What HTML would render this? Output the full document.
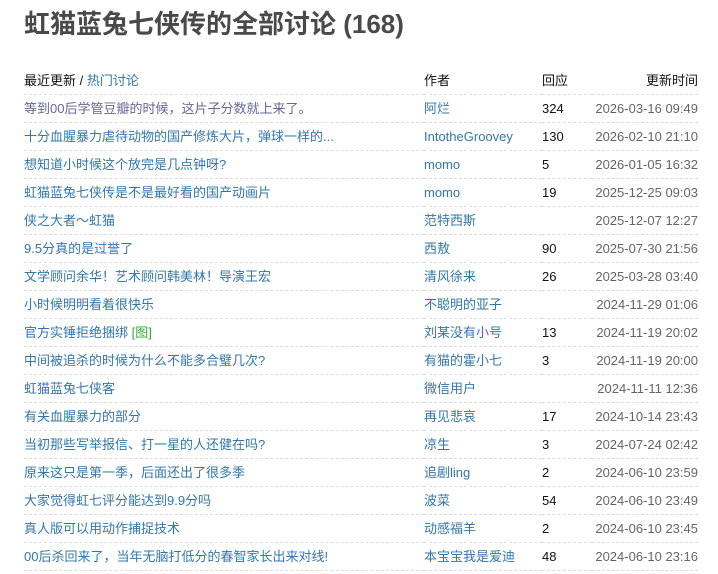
<!DOCTYPE html>
<html><head><meta charset="utf-8"><style>
body{margin:0;background:#fff;font-family:"Liberation Sans","Noto Sans CJK SC",sans-serif;font-size:13px;color:#111;width:718px;height:574px;overflow:hidden}
h1{position:absolute;left:24px;top:6px;margin:0;font-size:26px;font-weight:bold;color:#494949;line-height:36px}
table{position:absolute;left:24px;top:67px;width:674px;border-collapse:collapse;table-layout:fixed}
td{height:27px;padding:0;border-bottom:1px dashed #ddd;white-space:nowrap;line-height:27px;overflow:visible}
a{color:#37a;text-decoration:none}
a.v{color:#669}
.t{text-align:right;color:#666}
.g{color:#3a3}
</style></head><body>
<h1>虹猫蓝兔七侠传的全部讨论 (168)</h1>
<table>
<colgroup><col style="width:400px"><col style="width:118px"><col style="width:50px"><col style="width:106px"></colgroup>
<tr><td>最近更新 / <a>热门讨论</a></td><td>作者</td><td>回应</td><td class="t" style="color:#111">更新时间</td></tr>
<tr><td><a class="v">等到00后学管豆瓣的时候，这片子分数就上来了。</a></td><td><a>阿烂</a></td><td>324</td><td class="t">2026-03-16 09:49</td></tr>
<tr><td><a>十分血腥暴力虐待动物的国产修炼大片，弹球一样的...</a></td><td><a>IntotheGroovey</a></td><td>130</td><td class="t">2026-02-10 21:10</td></tr>
<tr><td><a>想知道小时候这个放完是几点钟呀?</a></td><td><a>momo</a></td><td>5</td><td class="t">2026-01-05 16:32</td></tr>
<tr><td><a>虹猫蓝兔七侠传是不是最好看的国产动画片</a></td><td><a>momo</a></td><td>19</td><td class="t">2025-12-25 09:03</td></tr>
<tr><td><a>侠之大者～虹猫</a></td><td><a>范特西斯</a></td><td></td><td class="t">2025-12-07 12:27</td></tr>
<tr><td><a>9.5分真的是过誉了</a></td><td><a>西敖</a></td><td>90</td><td class="t">2025-07-30 21:56</td></tr>
<tr><td><a>文学顾问余华！艺术顾问韩美林！导演王宏</a></td><td><a>清风徐来</a></td><td>26</td><td class="t">2025-03-28 03:40</td></tr>
<tr><td><a>小时候明明看着很快乐</a></td><td><a>不聪明的亚子</a></td><td></td><td class="t">2024-11-29 01:06</td></tr>
<tr><td><a>官方实锤拒绝捆绑</a> <span class="g">[图]</span></td><td><a>刘某没有小号</a></td><td>13</td><td class="t">2024-11-19 20:02</td></tr>
<tr><td><a>中间被追杀的时候为什么不能多合璧几次?</a></td><td><a>有猫的霍小七</a></td><td>3</td><td class="t">2024-11-19 20:00</td></tr>
<tr><td><a>虹猫蓝兔七侠客</a></td><td><a>微信用户</a></td><td></td><td class="t">2024-11-11 12:36</td></tr>
<tr><td><a>有关血腥暴力的部分</a></td><td><a>再见悲哀</a></td><td>17</td><td class="t">2024-10-14 23:43</td></tr>
<tr><td><a>当初那些写举报信、打一星的人还健在吗?</a></td><td><a>凉生</a></td><td>3</td><td class="t">2024-07-24 02:42</td></tr>
<tr><td><a>原来这只是第一季，后面还出了很多季</a></td><td><a>追剧ling</a></td><td>2</td><td class="t">2024-06-10 23:59</td></tr>
<tr><td><a>大家觉得虹七评分能达到9.9分吗</a></td><td><a>波菜</a></td><td>54</td><td class="t">2024-06-10 23:49</td></tr>
<tr><td><a>真人版可以用动作捕捉技术</a></td><td><a>动感福羊</a></td><td>2</td><td class="t">2024-06-10 23:45</td></tr>
<tr><td><a>00后杀回来了，当年无脑打低分的春智家长出来对线!</a></td><td><a>本宝宝我是爱迪</a></td><td>48</td><td class="t">2024-06-10 23:16</td></tr>
</table>
</body></html>
